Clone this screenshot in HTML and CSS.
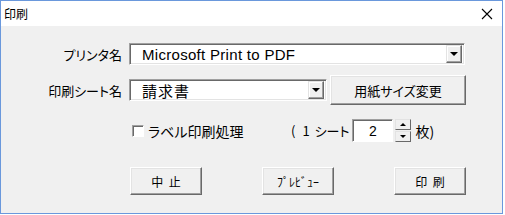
FILE: index.html
```html
<!doctype html>
<html>
	<head>
		<meta charset="UTF-8">
		<title>印刷</title>
		<link rel="stylesheet" href="styles.css">
	</head>
	<body>
		<div class="window">
			<div class="titlebar">
				<span class="title">印刷</span>
				<svg class="close" width="12" height="12" viewBox="0 0 12 12">
					<path d="M1 1L11 11M11 1L1 11" stroke="#000" stroke-width="1.1" fill="none"/>
				</svg>
			</div>
			<div class="panel">
				<div class="row row1">
					<span class="lbl">プリンタ名</span>
					<div class="combo combo-printer">
						<span class="combo-text latin">Microsoft Print to PDF</span>
						<span class="drop"><i class="arrow"></i></span>
					</div>
				</div>
				<div class="row row2">
					<span class="lbl">印刷シート名</span>
					<div class="combo combo-sheet">
						<span class="combo-text">請求書</span>
						<span class="drop"><i class="arrow"></i></span>
					</div>
					<button class="btn btn-paper">用紙サイズ変更</button>
				</div>
				<div class="row row3">
					<span class="check"></span>
					<span class="check-label">ラベル印刷処理</span>
					<span class="per"><span class="paren">(</span><span class="one">1</span><span>シート</span></span>
					<div class="spin"><span class="spin-val">2</span></div>
					<div class="spin-btns">
						<span class="spin-b"><i class="arrow up"></i></span>
						<span class="spin-b"><i class="arrow"></i></span>
					</div>
					<span class="unit">枚)</span>
				</div>
				<div class="row row4">
					<button class="btn btn-act">中&nbsp;&nbsp;止</button>
					<button class="btn btn-act">ﾌﾟﾚﾋﾞｭｰ</button>
					<button class="btn btn-act">印&nbsp;&nbsp;刷</button>
				</div>
			</div>
		</div>
	</body>
</html>
```

FILE: styles.css
```css
body{
	margin:0;
	background:#fff;
	font-family:"Noto Sans CJK JP","DejaVu Sans",sans-serif;
	font-feature-settings:"palt";
	color:#000;
}
.window{
	width:501px;
	height:212px;
	border:1px solid #6a98dc;
	background:#f0f0f0;
	display:flex;
	flex-direction:column;
}
.titlebar{
	height:25px;
	background:#fff;
	display:flex;
	align-items:center;
	justify-content:space-between;
	padding:0 9px 0 3px;
	flex-shrink:0;
}
.title{font-size:12px;line-height:12px}
.close{display:block}
.panel{flex:1}
.row{display:flex;align-items:center}
.row1{margin-top:17px;height:22px}
.row2{margin-top:10px;height:30px}
.row3{margin-top:14px;height:23px}
.row4{margin-top:25px;height:28px;padding-left:129px;gap:60px}
.lbl{
	width:121px;
	text-align:right;
	font-size:13px;
	margin-right:7px;
	white-space:nowrap;
}
.combo{
	height:22px;
	box-sizing:border-box;
	background:#fff;
	border:1px solid;
	border-color:#a0a0a0 #fff #fff #a0a0a0;
	box-shadow:inset 1px 1px 0 #696969,inset -1px -1px 0 #e3e3e3;
	display:flex;
	align-items:center;
	padding:0 2px 0 12px;
}
.combo-printer{width:336px}
.combo-sheet{width:198px}
.combo-text{flex:1;font-size:15px;letter-spacing:1px;white-space:nowrap}
.latin{font-family:"Liberation Sans",sans-serif;font-size:15px;letter-spacing:0.3px}
.drop{
	width:16px;
	height:18px;
	box-sizing:border-box;
	background:#f0f0f0;
	border:1px solid;
	border-color:#e3e3e3 #696969 #696969 #e3e3e3;
	box-shadow:inset -1px -1px 0 #a0a0a0,inset 1px 1px 0 #fff;
	display:flex;
	align-items:center;
	justify-content:center;
}
.arrow{
	display:block;
	width:0;
	height:0;
	border-left:4px solid transparent;
	border-right:4px solid transparent;
	border-top:4px solid #000;
}
.arrow.up{border-top:0;border-bottom:4px solid #000}
.btn{
	font-family:inherit;
	font-feature-settings:"palt";
	background:#f0f0f0;
	box-sizing:border-box;
	border:1px solid;
	border-color:#fff #696969 #696969 #fff;
	box-shadow:inset -1px -1px 0 #a0a0a0,inset 1px 1px 0 #e3e3e3;
	padding:0;
	color:#000;
}
.btn-paper{width:136px;height:30px;margin-left:3px;font-size:13px}
.btn-act{width:72px;height:28px;font-size:12px}
.check{
	width:12px;
	height:12px;
	box-sizing:border-box;
	background:#fff;
	border:1px solid;
	border-color:#a0a0a0 #fff #fff #a0a0a0;
	box-shadow:inset 1px 1px 0 #696969;
	margin-left:131px;
}
.check-label{font-size:14px;margin-left:4px;width:143px;white-space:nowrap}
.per{font-size:13px;white-space:nowrap;display:flex;margin-right:3px}
.paren{margin-right:7px}
.one{margin-right:5px}
.spin{
	width:41px;
	height:23px;
	box-sizing:border-box;
	background:#fff;
	border:1px solid;
	border-color:#a0a0a0 #fff #fff #a0a0a0;
	box-shadow:inset 1px 1px 0 #696969;
	display:flex;
	align-items:center;
	justify-content:center;
}
.spin-val{font-family:"Liberation Sans",sans-serif;font-size:14px}
.spin-btns{
	margin-left:2px;
	width:16px;
	height:23px;
	display:flex;
	flex-direction:column;
	gap:1px;
}
.spin-b{
	flex:1;
	background:#f0f0f0;
	box-sizing:border-box;
	border:1px solid;
	border-color:#e3e3e3 #696969 #696969 #e3e3e3;
	display:flex;
	align-items:center;
	justify-content:center;
}
.spin-b .arrow{border-left-width:3px;border-right-width:3px;border-top-width:3px}
.spin-b .arrow.up{border-bottom-width:3px;border-top-width:0}
.unit{font-size:14px;margin-left:4px}
```
